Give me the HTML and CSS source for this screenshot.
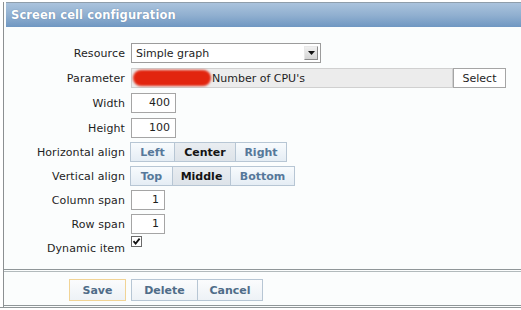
FILE: index.html
```html
<!DOCTYPE html>
<html>
<head>
<meta charset="utf-8">
<link rel="stylesheet" href="styles.css">
</head>
<body>
<div class="frame">
  <div class="header">Screen cell configuration</div>
  <div class="form">
    <div class="row gap5">
      <div class="label">Resource</div>
      <div class="select"><span class="sel-text">Simple graph</span><span class="arrow"><svg width="7" height="4" viewBox="0 0 7 4"><path d="M0 0H7L3.5 4Z" fill="#111"/></svg></span></div>
    </div>
    <div class="row gap5">
      <div class="label">Parameter</div>
      <div class="param"><span class="blot"></span><span class="param-text">Number of CPU's</span></div>
      <div class="btn-select">Select</div>
    </div>
    <div class="row gap5">
      <div class="label">Width</div>
      <div class="num w45">400</div>
    </div>
    <div class="row gap4">
      <div class="label">Height</div>
      <div class="num w45">100</div>
    </div>
    <div class="row gap4">
      <div class="label">Horizontal align</div>
      <div class="seg">
        <span class="seg-btn w-left">Left</span><span class="seg-btn active w-center">Center</span><span class="seg-btn w-right">Right</span>
      </div>
    </div>
    <div class="row gap4">
      <div class="label">Vertical align</div>
      <div class="seg">
        <span class="seg-btn w-top">Top</span><span class="seg-btn active w-middle">Middle</span><span class="seg-btn w-bottom">Bottom</span>
      </div>
    </div>
    <div class="row gap4">
      <div class="label">Column span</div>
      <div class="num w34">1</div>
    </div>
    <div class="row gap2">
      <div class="label">Row span</div>
      <div class="num w34">1</div>
    </div>
    <div class="row check-row">
      <div class="label check-label">Dynamic item</div>
      <span class="checkbox"><svg width="9" height="9" viewBox="0 0 9 9"><path d="M1.5 4.2L3.6 6.5L7.6 1.6" fill="none" stroke="#111" stroke-width="1.8"/></svg></span>
    </div>
  </div>
  <div class="footer">
    <span class="fbtn save">Save</span>
    <div class="fgroup">
      <span class="fbtn w-delete">Delete</span><span class="fbtn w-cancel">Cancel</span>
    </div>
  </div>
  <div class="bottomline"></div>
</div>
</body>
</html>
```
FILE: styles.css
```css
html, body {
  margin: 0;
  padding: 0;
}
body {
  width: 521px;
  height: 310px;
  overflow: hidden;
  background: #ffffff;
  font-family: "DejaVu Sans", Verdana, sans-serif;
  font-size: 11px;
  color: #1e1e1e;
}
.frame {
  margin-left: 3px;
  border-left: 1px solid #8c9092;
  background: #fbfdfd;
  height: 306px;
}
.header {
  margin: 2px 0 0 2px;
  height: 24px;
  border-top: 1px solid #8f9eab;
  background: linear-gradient(#aac3dd, #91b0d0 50%, #6f97c2);
  color: #ffffff;
  font-weight: bold;
  font-size: 11.5px;
  line-height: 24px;
  padding-left: 5px;
  letter-spacing: 0.1px;
  text-shadow: 0 0 1px rgba(60, 90, 130, 0.6);
}
.form {
  height: 226px;
  padding-top: 16px;
  border-bottom: 1px solid #8f9698;
  display: flex;
  flex-direction: column;
}
.row {
  display: flex;
  align-items: center;
  height: 20px;
}
.gap5 { margin-bottom: 5px; }
.gap4 { margin-bottom: 4px; }
.gap2 { margin-bottom: 2px; }
.label {
  width: 121px;
  text-align: right;
  margin-right: 6px;
  letter-spacing: 0.1px;
}
.select {
  box-sizing: border-box;
  width: 190px;
  height: 20px;
  border: 1px solid #9c9c9c;
  background: #fff;
  display: flex;
  align-items: center;
  padding-left: 4px;
}
.sel-text { flex: 1; }
.arrow {
  box-sizing: border-box;
  width: 14px;
  height: 14px;
  margin-right: 2px;
  border: 1px solid #8a8a8a;
  border-top-color: #e8e8e8;
  border-left-color: #e8e8e8;
  background: linear-gradient(#f0f0f0, #d4d4d4);
  display: flex;
  align-items: center;
  justify-content: center;
}
.param {
  box-sizing: border-box;
  width: 322px;
  height: 20px;
  border: 1px solid #d0d0d0;
  background: #ececec;
  display: flex;
  align-items: center;
}
.blot {
  width: 78px;
  height: 16px;
  margin-left: 1px;
  border-radius: 8px;
  background: #e2250f;
  filter: blur(0.8px);
}
.param-text { margin-left: 1px; }
.btn-select {
  box-sizing: border-box;
  width: 53px;
  height: 20px;
  border: 1px solid #a5a5a5;
  background: #fff;
  display: flex;
  align-items: center;
  justify-content: center;
}
.num {
  box-sizing: border-box;
  height: 20px;
  border: 1px solid #a5a5a5;
  background: #fff;
  text-align: right;
  padding-right: 5px;
  line-height: 18px;
}
.w45 { width: 45px; }
.w34 { width: 34px; }
.seg {
  display: flex;
  margin-left: -1px;
}
.seg-btn {
  box-sizing: border-box;
  height: 20px;
  border: 1px solid #b7c6d4;
  margin-left: -1px;
  background: linear-gradient(#f8fbfd, #e5edf4);
  color: #56789a;
  font-weight: bold;
  display: flex;
  align-items: center;
  justify-content: center;
}
.seg-btn:first-child { margin-left: 0; }
.seg-btn.active {
  background: linear-gradient(#e9edf1, #dde3e9);
  color: #141414;
}
.w-left { width: 45px; }
.w-center { width: 62px; }
.w-right { width: 52px; }
.w-top { width: 43px; }
.w-middle { width: 59px; }
.w-bottom { width: 65px; }
.check-row {
  align-items: flex-start;
  height: 20px;
}
.check-label {
  margin-top: 6px;
}
.checkbox {
  box-sizing: border-box;
  width: 11px;
  height: 11px;
  border: 1px solid #6a6a6a;
  background: #fff;
  display: flex;
  align-items: center;
  justify-content: center;
}
.footer {
  margin-top: 1px;
  border-top: 1px solid #b2babc;
  border-bottom: 1px solid #8f9698;
  display: flex;
  align-items: flex-start;
  padding-top: 7px;
  box-sizing: border-box;
  height: 35px;
  padding-left: 65px;
}
.fbtn {
  box-sizing: border-box;
  height: 22px;
  border: 1px solid #b7c6d4;
  background: linear-gradient(#fbfcfd, #edf2f6);
  color: #4f6c88;
  font-weight: bold;
  display: flex;
  align-items: center;
  justify-content: center;
}
.save {
  width: 57px;
  border-color: #f1d496;
  margin-right: 5px;
}
.fgroup { display: flex; }
.w-delete { width: 67px; }
.w-cancel { width: 66px; margin-left: -1px; }
.bottomline {
  margin-top: 1px;
  margin-left: -4px;
  border-top: 1px solid #8f9698;
}
```
